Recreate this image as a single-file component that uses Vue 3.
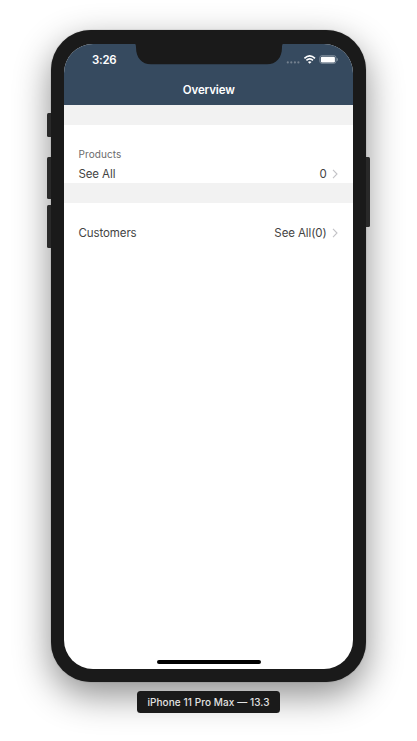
<script setup>
const buttons = ['mute', 'up', 'down', 'power']
</script>

<template>
  <main class="stage">
    <div class="device">
      <i v-for="b in buttons" :key="b" class="button" :class="b"></i>
      <div class="screen">
        <header class="header">
          <svg class="notch" width="152" height="22" viewBox="0 0 152 22">
            <path d="M0 0H152C149.5 .2 149 1.7 149 4.5C149 15 143 21.3 134 21.3H18C9 21.3 3 15 3 4.5C3 1.7 2.5 .2 0 0Z" fill="#1a1a1a" />
          </svg>
          <div class="status">
            <span class="time">3:26</span>
            <svg class="signals" width="52" height="12" viewBox="0 0 52 12">
              <g fill="#74818f">
                <circle cx="1.8" cy="8.4" r="1.1" /><circle cx="5.3" cy="8.4" r="1.1" />
                <circle cx="8.9" cy="8.4" r="1.1" /><circle cx="12.4" cy="8.4" r="1.1" />
              </g>
              <g fill="none" stroke="#fff" stroke-width="1.7">
                <path d="M18.4 4.3Q23.7 -.5 29 4.3" />
                <path d="M20.4 6.4Q23.7 3.5 27 6.4" />
              </g>
              <path d="M21.9 7.9Q23.7 6.5 25.5 7.9L23.7 9.8Z" fill="#fff" />
              <rect x="33.8" y="1.6" width="16.2" height="7.8" rx="2.2" fill="none" stroke="#8794a2" stroke-width=".8" />
              <rect x="34.9" y="2.7" width="14" height="5.7" rx="1.2" fill="#fff" />
              <path d="M51 4.1Q52 5.5 51 6.9Z" fill="#9ba6b1" stroke="#9ba6b1" stroke-width=".4" />
            </svg>
          </div>
          <h1 class="title">Overview</h1>
        </header>
        <div class="divider"></div>
        <section class="products">
          <h2 class="caption">Products</h2>
          <div class="row">
            <span class="see">See All</span>
            <span class="value zero">0</span>
            <svg class="chevron" width="6" height="10" viewBox="0 0 6 10"><path d="M1 .8L5 5L1 9.2" /></svg>
          </div>
        </section>
        <div class="divider"></div>
        <section class="customers">
          <div class="row">
            <span class="cust">Customers</span>
            <span class="value all">See All(0)</span>
            <svg class="chevron" width="6" height="10" viewBox="0 0 6 10"><path d="M1 .8L5 5L1 9.2" /></svg>
          </div>
        </section>
        <div class="home"></div>
      </div>
    </div>
    <div class="label"><span>iPhone 11 Pro Max — 13.3</span></div>
  </main>
</template>

<style>
body { margin: 0; background: #fff; overflow: hidden; }
</style>

<style scoped>
.stage {
  box-sizing: border-box;
  width: 417px;
  height: 741px;
  padding-top: 30px;
  overflow: hidden;
  font-family: Inter, "Liberation Sans", sans-serif;
  background: #fff;
}
.device {
  position: relative;
  box-sizing: border-box;
  width: 315px;
  height: 652.3px;
  margin-left: 51px;
  padding: 13.5px 12.7px 13.1px 13.2px;
  border-radius: 40px;
  background: #1a1a1a;
  box-shadow: 0 13px 36px rgba(0, 0, 0, .45), 0 0 1px rgba(0, 0, 0, .6);
}
.button { position: absolute; left: -4px; width: 4px; background: #292929; border-radius: 1.5px 0 0 1.5px; }
.mute { top: 83px; height: 24px; }
.up { top: 127px; height: 42px; }
.down { top: 175px; height: 43px; }
.power { left: auto; right: -3.5px; top: 127px; height: 70px; border-radius: 0 1.5px 1.5px 0; }
.screen {
  display: flex;
  flex-direction: column;
  height: 100%;
  border-radius: 29px;
  background: #fff;
  overflow: hidden;
  color: #434343;
}
.header { position: relative; flex: none; height: 61.5px; background: #364a5f; color: #fff; }
.notch { position: absolute; left: 68.8px; top: -.3px; }
.status { display: flex; justify-content: space-between; padding: 10.3px 15.8px 0 27.8px; height: 13px; }
.time { font-size: 11.4px; line-height: 13px; font-weight: 600; letter-spacing: -.2px; }
.signals { flex: none; }
.title { margin: 15.2px 0 0; font-size: 11.5px; line-height: 16px; font-weight: 600; letter-spacing: -.12px; text-align: center; }
.divider { flex: none; height: 20px; background: #f2f2f2; }
.products { flex: none; box-sizing: border-box; height: 58px; padding: 22px 15.2px 0 14.3px; }
.caption { margin: 0; font-size: 10px; line-height: 15px; font-weight: 400; letter-spacing: .08px; color: #6b6b6b; }
.row { display: flex; align-items: center; height: 16px; font-size: 11.5px; line-height: 16px; letter-spacing: -.1px; }
.products .row { margin-top: 4px; }
.customers { padding: 22px 15.2px 0 14.3px; }
.value { margin-left: auto; margin-right: 5.6px; }
.chevron { flex: none; fill: none; stroke: #c3c3c7; stroke-width: 1.1; }
.home { width: 103.5px; height: 3.4px; margin: auto auto 5.7px; border-radius: 2px; background: #000; }
.label {
  position: relative;
  display: flex;
  align-items: center;
  justify-content: center;
  width: 143px;
  height: 22px;
  margin: 8.7px 0 0 137px;
  border-radius: 3.5px;
  background: #1a1a1a;
  color: #e2e2e2;
  font-size: 10px;
  font-weight: 500;
  letter-spacing: .08px;
  white-space: nowrap;
}
</style>
